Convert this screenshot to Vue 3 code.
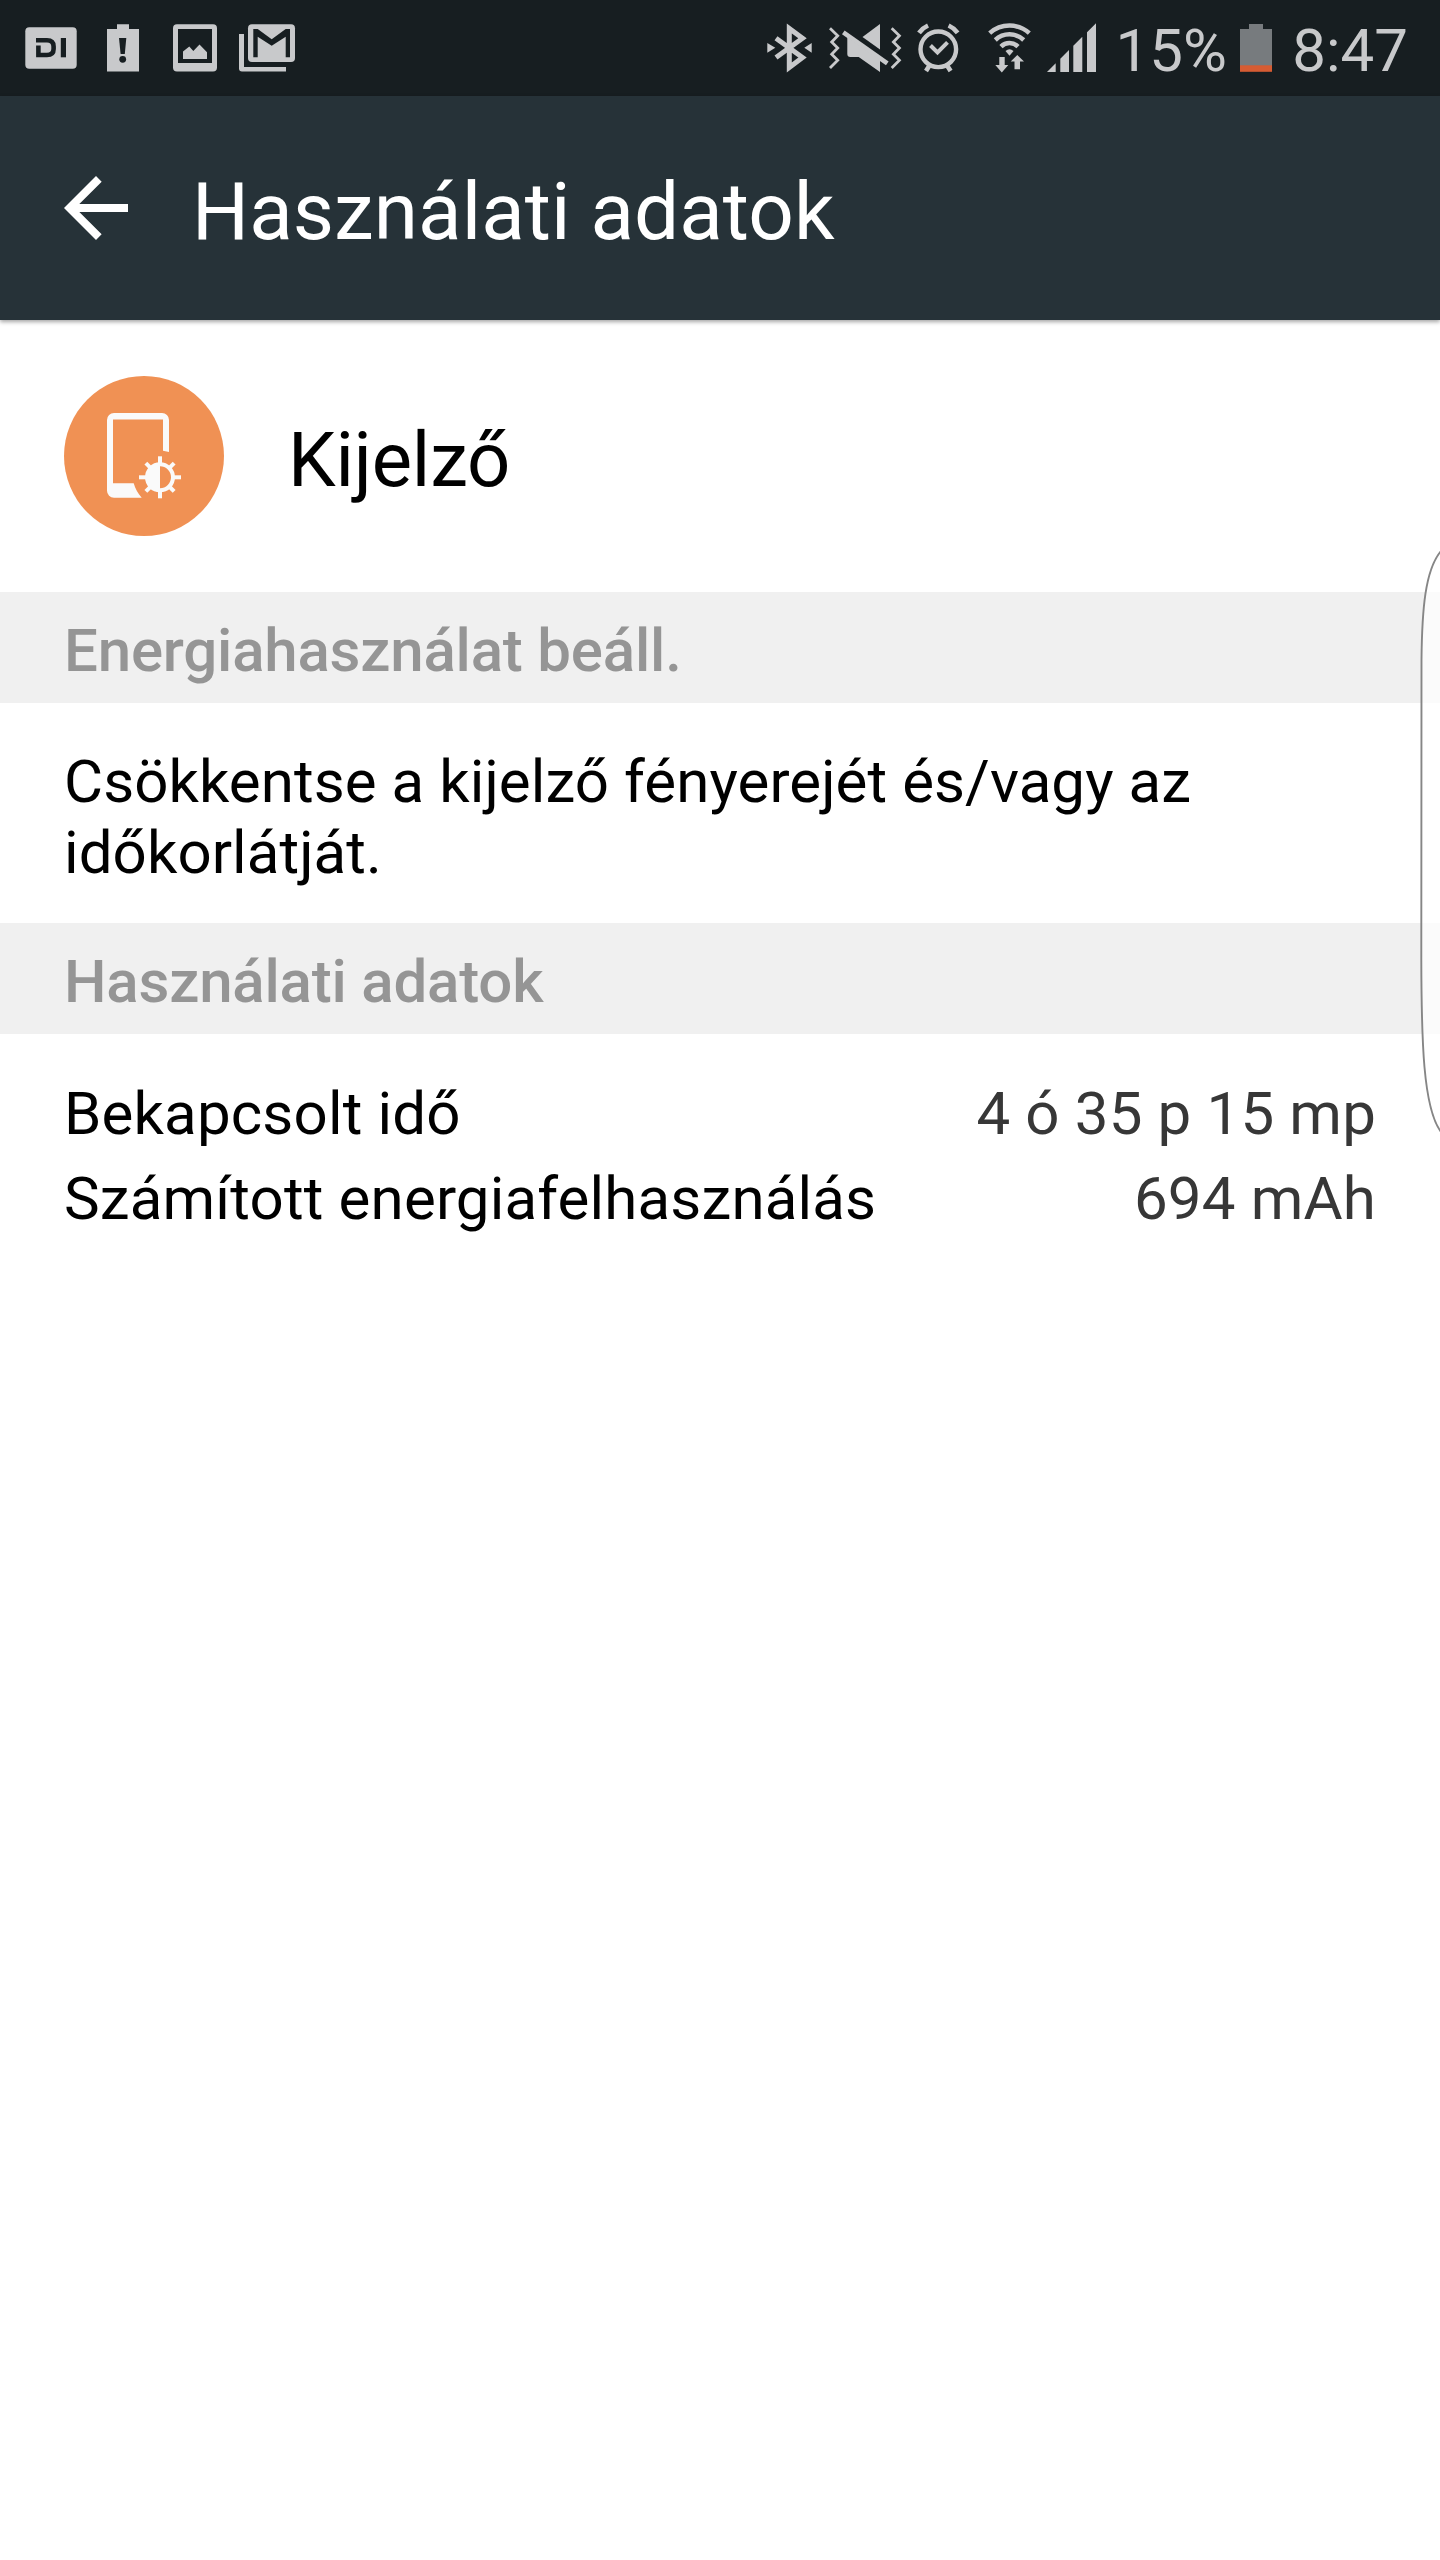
<script setup>
const rows = [
  { label: 'Bekapcsolt idő', value: '4 ó 35 p 15 mp' },
  { label: 'Számított energiafelhasználás', value: '694 mAh' },
]
const rayAngles = [0, 45, 90, 135, 180, 225, 270, 315]
</script>

<template>
  <div class="screen">
    <div class="statusbar">
      <div class="notifications">
        <svg width="54" height="96" viewBox="24 0 54 96">
          <rect x="25.3" y="27.3" width="51.400" height="41.500" rx="4" fill="#c8c9cb" />
          <path d="M36 40.3H47Q53.6 40.3 53.6 46.5V49Q53.6 55 47 55H38.4V45.5" fill="none" stroke="#171e21" stroke-width="4.6" />
          <rect x="60.8" y="38" width="5.2" height="19.3" fill="#171e21" />
        </svg>
        <svg class="alert" width="34" height="96" viewBox="106 0 34 96">
          <path d="M107 29H117V24.3H129V29H139V71.5H107Z" fill="#c8c9cb" />
          <path d="M119 38H126.3L124.8 54H120.6Z" fill="#171e21" />
          <circle cx="122.7" cy="59.3" r="3.4" fill="#171e21" />
        </svg>
        <svg class="picture" width="46" height="96" viewBox="172 0 46 96">
          <path fill-rule="evenodd" d="M177 24.3H213a4 4 0 0 1 4 4V67.5a4 4 0 0 1-4 4H177a4 4 0 0 1-4-4V28.3a4 4 0 0 1 4-4ZM178 29V63H212V29Z" fill="#c8c9cb" />
          <path d="M183 59V51.5L189.3 46.5L193.3 51L199.5 44.500L207 52.3V59Z" fill="#c8c9cb" />
        </svg>
        <svg class="mail" width="58" height="96" viewBox="238 0 58 96">
          <rect x="248" y="24.3" width="47" height="37.7" rx="4" fill="#c8c9cb" />
          <path d="M253.3 29H257.7L271.7 39.3L285.7 29H290V57.3H285.7V36.7L271.7 45.7L257.7 36.7V57.3H253.3Z" fill="#171e21" />
          <path d="M239 34H244V67H286V71.5H242a3 3 0 0 1-3-3Z" fill="#c8c9cb" />
        </svg>
      </div>

      <div class="system">
        <svg width="332" height="96" viewBox="766 0 332 96">
          <g fill="none" stroke="#c8c9cb">
            <!-- bluetooth -->
            <path d="M776 38.2L802.5 57.5L789.3 67.5V28.5L802.5 38.2L776 57.5" stroke-width="5" />
            <!-- vibration waves -->
            <path d="M830 28.3L837.7 35.7L831.700 42L837.7 48L831.700 54.200L837.7 60.3L830 68" stroke-width="2.8" />
            <path d="M891.700 28.3L899.4 35.7L893.4 42L899.4 48L893.4 54.200L899.4 60.3L891.700 68" stroke-width="2.8" />
            <!-- mute slash -->
            <path d="M843.3 32.3L887.3 63.300" stroke-width="4.6" />
            <!-- alarm -->
            <circle cx="938.3" cy="49.3" r="17.8" stroke-width="4.4" />
            <path d="M930.5 45.5L937.5 52.500L947.5 42.300" stroke-width="4" />
            <path d="M919 32.800Q922.500 28 928 25.500M957.600 32.800Q954.100 28 948.600 25.500M929.500 65.500L926 71M947.100 65.500L950.600 71" stroke-width="4.6" />
            <!-- wifi -->
            <path d="M989.700 33.200A29.600 29.600 0 0 1 1029.300 33.200M995.300 40A20.700 20.700 0 0 1 1023.700 40M1001 46.600A12 12 0 0 1 1018 46.600" stroke-width="4.500" />
          </g>
          <g fill="#c8c9cb">
            <path d="M767.3 43L775.3 47.7L767.3 52.7ZM811.700 43L804.3 47.7L811.7 52.7Z" />
            <path d="M862.5 37L880 24V49.500Z" />
            <path d="M847.3 37V54a3 3 0 0 0 3 3H858.700L880 72V60Z" />
            <path d="M1005.500 51Q1009.500 47.500 1013.500 51L1009.500 55.700Z" />
            <path d="M999.300 57H1004.700V65H1008.300L1001.800 72.500L995.300 65H999.300Z" />
            <path d="M1014.500 69.300V61.500H1010.700L1017.300 55L1024 61.500H1020V69.300Z" />
            <path d="M1047 72L1055.700 63.300V72ZM1060.300 72V58.700L1069 50V72ZM1073.300 72V45.700L1082.300 36.700V72ZM1087 72V32.300L1096 23.300V72Z" />
          </g>
        </svg>
        <span class="percent">15%</span>
        <svg class="battery" width="32" height="96" viewBox="1240 0 32 96">
          <path d="M1240 29H1249V24H1263V29H1272V66H1240Z" fill="#777b7e" />
          <rect x="1240" y="65.300" width="32" height="6.500" fill="#d65c33" />
        </svg>
        <span class="clock">8:47</span>
      </div>
    </div>

    <header class="appbar">
      <svg width="96" height="96" viewBox="0 0 24 24"><path fill="#fff" d="M20 11H7.83l5.59-5.59L12 4l-8 8 8 8 1.41-1.41L7.83 13H20v-2z" /></svg>
      <h1>Használati adatok</h1>
    </header>

    <section class="subject">
      <svg width="160" height="160" viewBox="64 376 160 160">
        <circle cx="144" cy="456" r="80" fill="#f09154" />
        <path fill="#fafafa" d="M141.7 497.7H114a7 7 0 0 1-7-7V420a7 7 0 0 1 7-7H162a7 7 0 0 1 7 7V452L163 450.700V419.500H113V483.300H133.700Q136 491.500 141.700 497.700Z" />
        <circle cx="160" cy="477.300" r="13" fill="none" stroke="#fafafa" stroke-width="4" />
        <path fill="#fafafa" d="M160 464V490.600A13.300 13.300 0 0 1 160 464Z" />
        <rect v-for="a in rayAngles" :key="a" x="158" :y="a % 90 ? 457.3 : 456.300" width="4" height="7" fill="#fafafa" :transform="`rotate(${a} 160 477.300)`" />
      </svg>
      <h2>Kijelző</h2>
    </section>

    <h3>Energiahasználat beáll.</h3>
    <p class="advice">Csökkentse a kijelző fényerejét és/vagy az időkorlátját.</p>
    <h3>Használati adatok</h3>
    <dl>
      <div v-for="r in rows" :key="r.label" class="row">
        <dt>{{ r.label }}</dt>
        <dd>{{ r.value }}</dd>
      </div>
    </dl>

    <!-- edge panel handle -->
    <svg class="edge" width="22" height="592" viewBox="1418 546 22 592">
      <path d="M1441 551C1425 570 1422 610 1421.500 660L1421.300 960C1421.500 1040 1423 1108 1441 1132" fill="#fff" fill-opacity=".75" stroke="#868686" stroke-width="1.900" />
    </svg>
  </div>
</template>

<style>
body { margin: 0; background: #fff; }
</style>

<style scoped>
.screen { position: relative; width: 1440px; height: 2560px; overflow: hidden; background: #fff; color: #000; font-family: Roboto, sans-serif; }
svg { display: block; flex: none; }
.statusbar { display: flex; justify-content: space-between; height: 96px; background: #171e21; color: #c8c9cb; }
.notifications { display: flex; padding-left: 24px; }
.alert { margin-left: 28px; }
.picture { margin-left: 32px; }
.mail { margin-left: 20px; }
.system { display: flex; padding-right: 32px; font-size: 60px; line-height: 102px; }
.percent { margin-left: 17.7px; }
.battery { margin-left: 13px; }
.clock { margin-left: 20.4px; }
.appbar { display: flex; align-items: center; height: 224px; padding-left: 48px; box-sizing: border-box; background: #263238; color: #fff; box-shadow: 0 2px 4px rgba(0, 0, 0, .35); }
h1, h2, h3, p, dl, dt, dd { margin: 0; font-weight: 400; }
h1 { margin-left: 48px; padding-top: 8px; font-size: 80px; line-height: 94px; letter-spacing: .07px; }
.subject { display: flex; align-items: center; height: 272px; padding-left: 64px; }
h2 { margin-left: 64px; padding-top: 8px; font-size: 76px; line-height: 90px; letter-spacing: -.2px; }
h3 { height: 111px; box-sizing: border-box; padding: 6px 64px 0; background: #f0f0f0; color: #959595; font-size: 60px; font-weight: 500; line-height: 105px; letter-spacing: -.2px; }
.advice { height: 220px; box-sizing: border-box; padding: 43px 64px 0; font-size: 60px; line-height: 71px; letter-spacing: .08px; }
dl { padding: 37px 64px 0; font-size: 60px; line-height: 85px; letter-spacing: .17px; }
.row { display: flex; justify-content: space-between; }
dd { color: #373737; }
.edge { position: absolute; top: 546px; right: 0; }
</style>
